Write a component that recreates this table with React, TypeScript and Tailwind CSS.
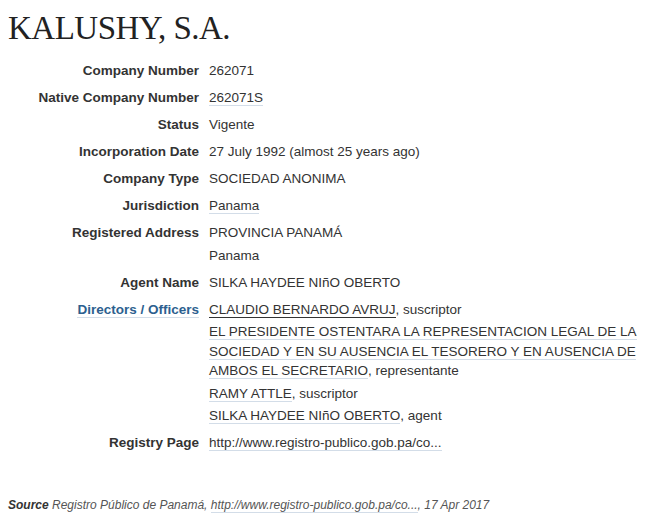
import React from "react";

type Director = { name: string; role: string; active?: boolean };

const directors: Director[] = [
  { name: "CLAUDIO BERNARDO AVRUJ", role: "suscriptor", active: true },
  {
    name: "EL PRESIDENTE OSTENTARA LA REPRESENTACION LEGAL DE LA SOCIEDAD Y EN SU AUSENCIA EL TESORERO Y EN AUSENCIA DE AMBOS EL SECRETARIO",
    role: "representante",
  },
  { name: "RAMY ATTLE", role: "suscriptor" },
  { name: "SILKA HAYDEE NIñO OBERTO", role: "agent" },
];

function Link({ children, dark }: { children: React.ReactNode; dark?: boolean }) {
  return (
    <span className={dark ? "border-b border-[#333]" : "border-b border-[#d3dde8]"}>
      {children}
    </span>
  );
}

function Row({ label, labelLink, children }: { label: string; labelLink?: boolean; children: React.ReactNode }) {
  return (
    <div className="flex py-[3.5px]">
      <div className="w-[191px] shrink-0 text-right font-bold">
        {labelLink ? (
          <span className="border-b border-[#d3dde8] text-[#2c5f8f]">{label}</span>
        ) : (
          label
        )}
      </div>
      <div className="ml-[10px] flex-1">{children}</div>
    </div>
  );
}

export default function App() {
  return (
    <div className="min-h-[527px] bg-white px-2 text-[13.5px] leading-[20px] text-[#333] [font-family:'Liberation_Sans',Arial,sans-serif]">
      <h1 className="pt-[9px] text-[33px] leading-[38px] tracking-[-0.5px] text-[#222] [font-family:'Liberation_Serif','Times_New_Roman',serif]">
        KALUSHY, S.A.
      </h1>

      <div className="mt-[10px]">
        <Row label="Company Number">262071</Row>
        <Row label="Native Company Number">
          <Link>262071S</Link>
        </Row>
        <Row label="Status">Vigente</Row>
        <Row label="Incorporation Date">27 July 1992 (almost 25 years ago)</Row>
        <Row label="Company Type">SOCIEDAD ANONIMA</Row>
        <Row label="Jurisdiction">
          <Link>Panama</Link>
        </Row>
        <Row label="Registered Address">
          <div className="flex flex-col gap-[3px]">
            <div>PROVINCIA PANAMÁ</div>
            <div>Panama</div>
          </div>
        </Row>
        <Row label="Agent Name">SILKA HAYDEE NIñO OBERTO</Row>
        <Row label="Directors / Officers" labelLink>
          <ul className="flex flex-col gap-[3px] leading-[19.5px]">
            {directors.map((d) => (
              <li key={d.name}>
                <Link dark={d.active}>{d.name}</Link>, {d.role}
              </li>
            ))}
          </ul>
        </Row>
        <Row label="Registry Page">
          <Link>http://www.registro-publico.gob.pa/co...</Link>
        </Row>
      </div>

      <div className="mt-[39px] text-[12px] italic text-[#555]">
        <span className="font-bold text-[#333]">Source</span> Registro Público de Panamá,{" "}
        <span className="border-b border-[#d3dde8]">http://www.registro-publico.gob.pa/co...</span>, 17 Apr 2017
      </div>
    </div>
  );
}
